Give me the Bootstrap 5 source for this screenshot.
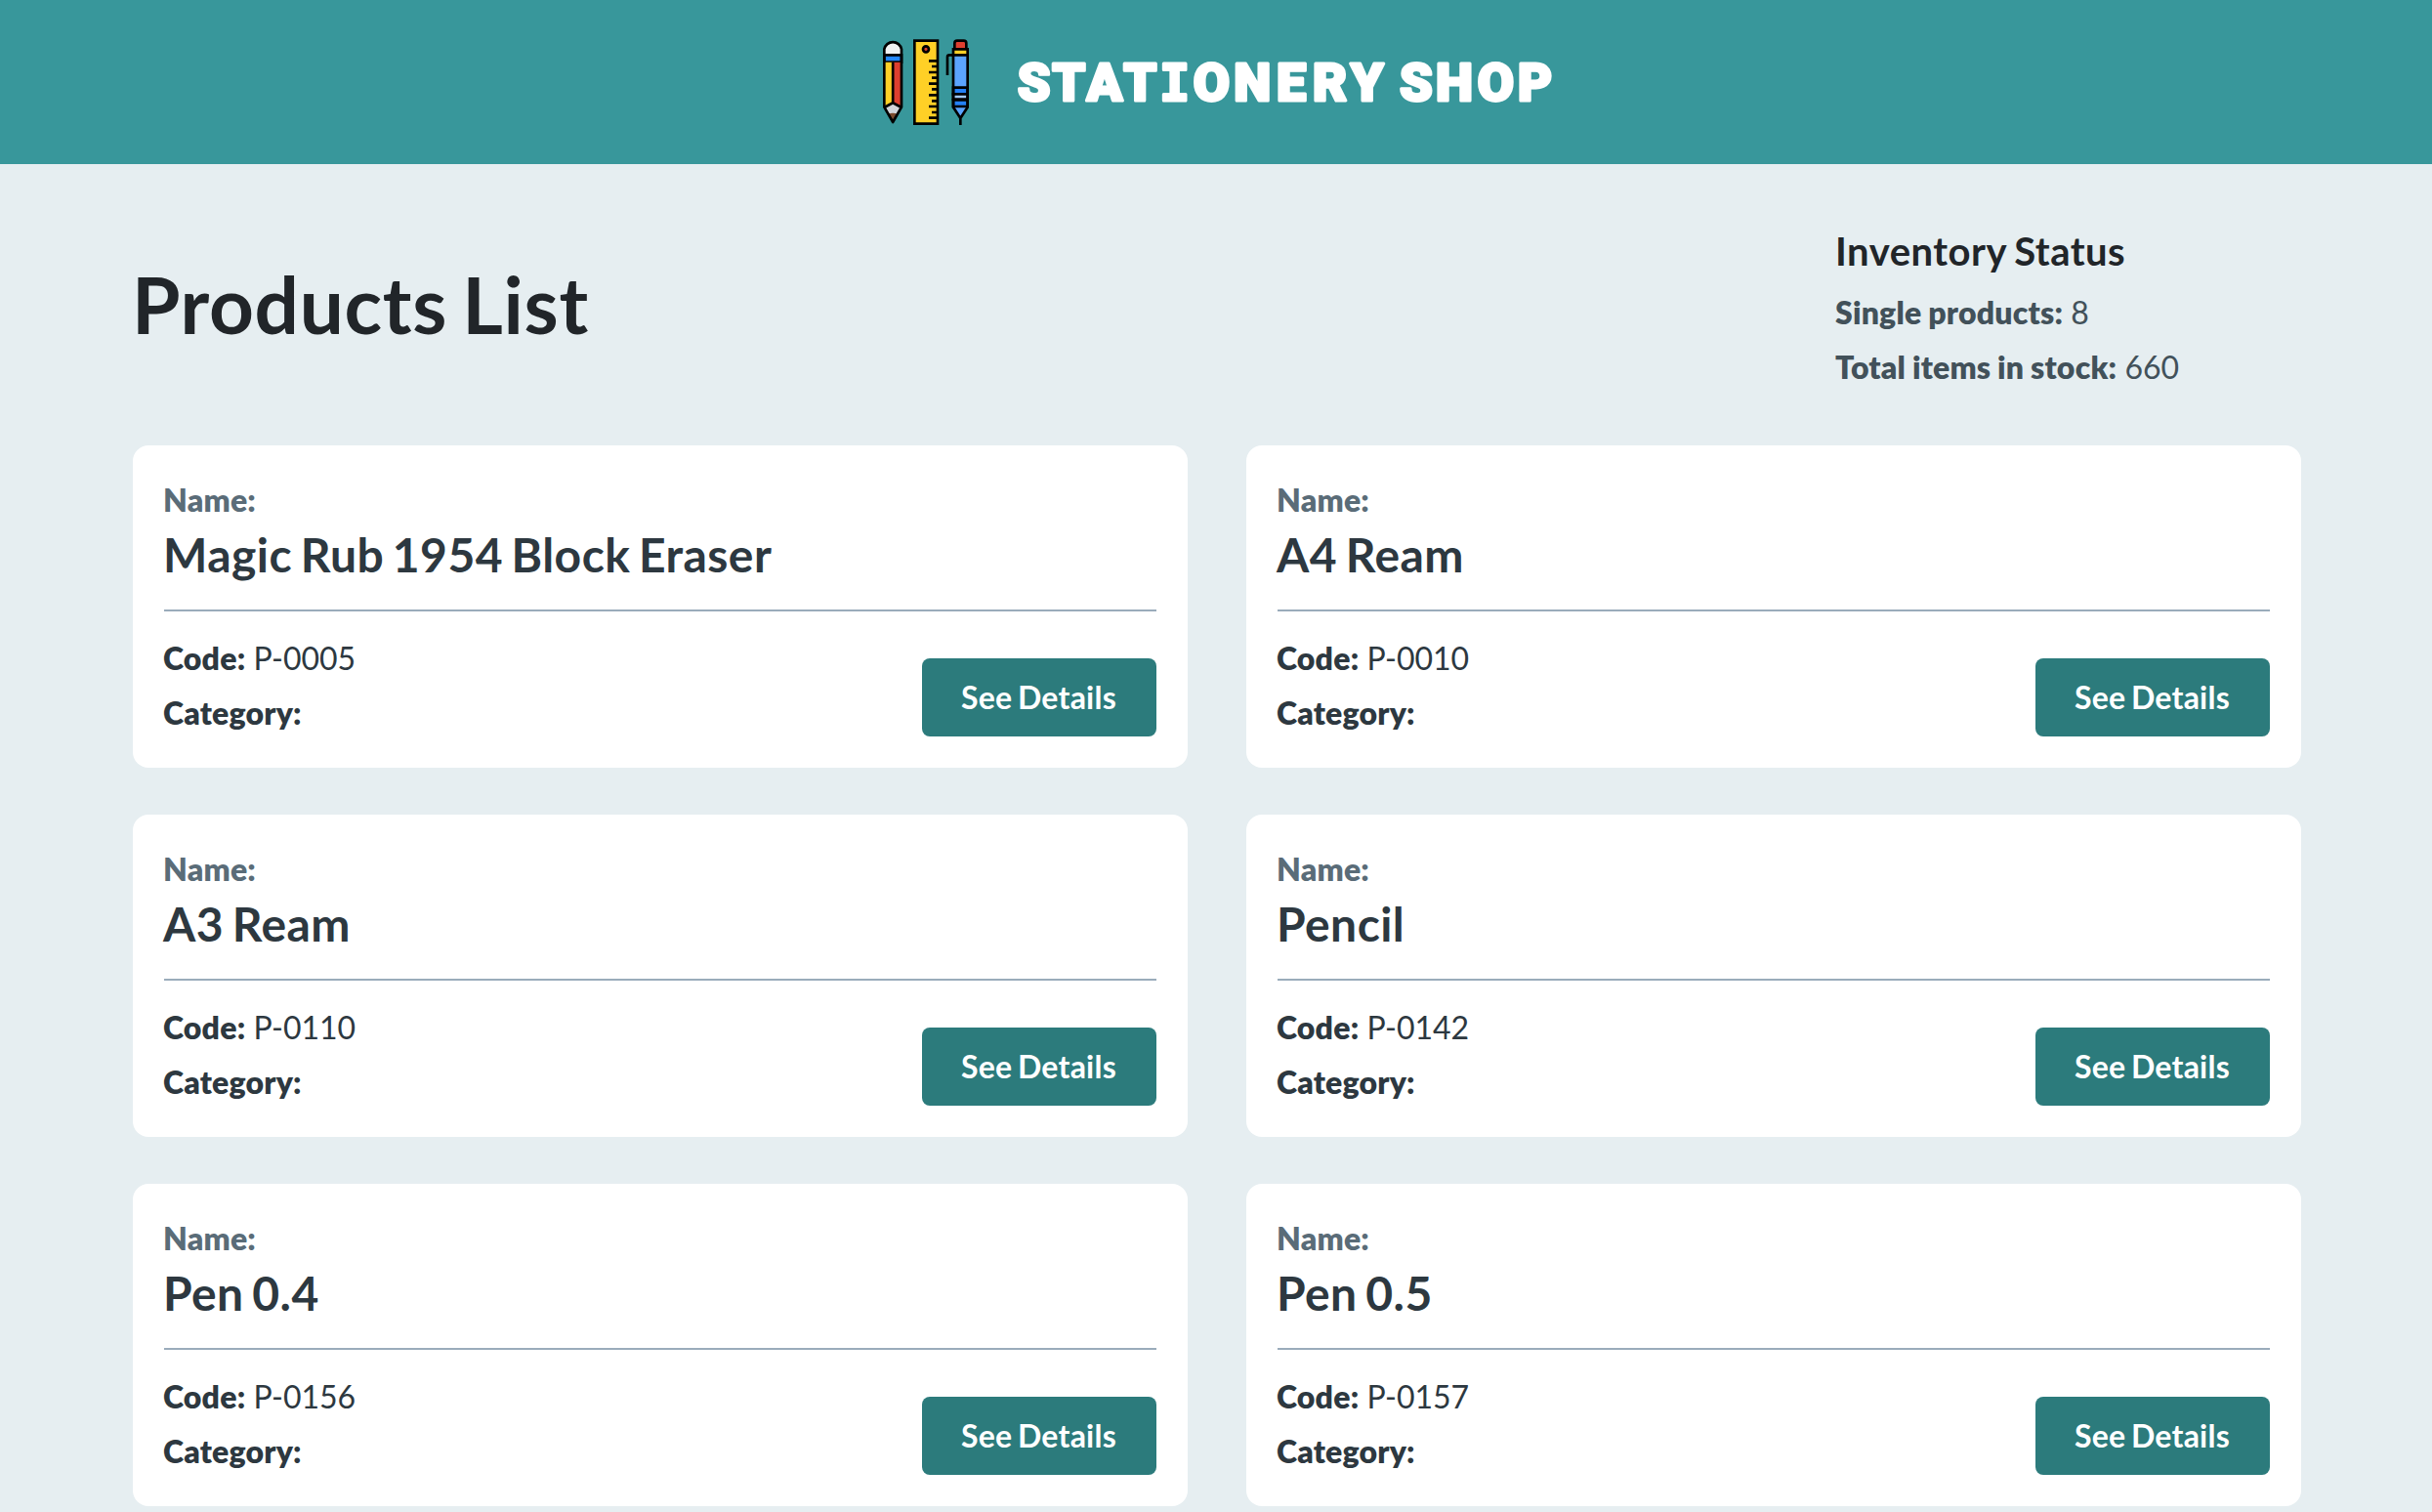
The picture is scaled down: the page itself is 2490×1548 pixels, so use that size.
<!DOCTYPE html>
<html lang="en">
<head>
<meta charset="utf-8">
<title>Stationery Shop</title>
<link href="https://cdn.jsdelivr.net/npm/bootstrap@5.3.0/dist/css/bootstrap.min.css" rel="stylesheet">
<style>
body{font-family:Lato,sans-serif;font-size:32px;line-height:48px;background:#e6eef1;color:#212529;height:1548px;overflow:hidden}
.shop-bar{height:168px;background:#38979b;gap:48px}
.shop-bar svg{overflow:visible;flex:none}
.brand-text{font:900 54px Roboto,sans-serif;fill:#fff;stroke:#fff;stroke-width:3;stroke-linejoin:round;text-anchor:middle}
.slab-i{font-family:"DejaVu Sans Mono",monospace;font-weight:700;font-size:52px}
.shop-main{padding:64px 134px 0 136px}
.list-head{height:224px}
.list-head h1{font-size:80px;line-height:96px;font-weight:700;margin:31px 0 0 -1px;letter-spacing:.7px;word-spacing:-5px}
.stock{width:477px;color:#42515a}
.stock h2{font-size:40px;line-height:48px;font-weight:700;color:#212529;margin:1px 0 15px;letter-spacing:.5px;word-spacing:-2px}
.stock p,.item p{margin-bottom:8px}
strong{font-weight:800;letter-spacing:.2px;word-spacing:-.8px}
.items{--bs-gutter-x:60px;--bs-gutter-y:48px}
.item{height:330px;padding:32px;border:0;border-radius:16px;color:#2d3840}
.item .lbl{color:#5a6c78;font-weight:800;margin-left:-1px;letter-spacing:.2px}
.item h3{font-size:48px;line-height:58px;font-weight:700;margin:3px 0 27px -1px;letter-spacing:.45px;word-spacing:-3.5px}
.item p{margin-left:-1px}
.item hr{margin:0 0 24px;border-top:2px solid #9aacbb;opacity:1}
.btn-see{width:240px;height:80px;border-radius:8px;background:#2c7b7c;color:#fff;font-size:32px;line-height:48px;font-weight:700;padding:16px 1px 16px 0;border:0;letter-spacing:.25px;word-spacing:-2.5px}
</style>
</head>
<body>
<header class="shop-bar d-flex justify-content-center align-items-center">
<svg width="88" height="88" viewBox="42 29 264 264" stroke="#000" stroke-width="8">
<path d="M46 238V60a27 27 0 0 1 53 0v178L72.500 283Z" fill="#d3d5da" stroke="none"/>
<path d="M46 78V60a27 27 0 0 1 53 0v18Z" fill="#f1f3f3" stroke="none"/>
<path d="M46 78H99V100H46Z" fill="#2488ff"/>
<path d="M46 100H72.500V225L46 239Z" fill="#ffd026" stroke="none"/>
<path d="M72.500 100H99V239L72.500 225Z" fill="#dd3f2f" stroke="none"/>
<path d="M72.500 100V225M46 239L72.500 225L99 239" fill="none"/>
<path d="M58 260Q72 252 87 260L72.500 284Z" fill="#7b4a2d" stroke="none"/>
<path d="M46 238V60a27 27 0 0 1 53 0v178L72.500 284Z" fill="none" stroke-linejoin="round"/>
<path d="M139 34H210V289H139Z" fill="#ffd026"/>
<circle cx="174" cy="60" r="9" fill="#dd3f2f"/>
<path d="M183 96H208M192 113H208M183 131H208M192 148H208M183 166H208M192 183H208M183 201H208M192 219H208M183 236H208M192 254H208M183 271H208"/>
<path d="M258 78H302V237L280 271L258 237Z" fill="#5ba4ff" stroke="none"/>
<path d="M258 178H302V198H258ZM258 216H302V236H258Z" fill="#2480f5"/>
<path d="M258 198H302V214H258Z" fill="#a0caff"/>
<path d="M262 60V42q0-8 8-8h20q8 0 8 8v18Z" fill="#dd3f2f"/>
<path d="M258 60H302V78H258Z" fill="#ffd026"/>
<path d="M258 78V238L280 272L302 238V78M280 270V293M258 78H246Q240 78 240 84V140" fill="none" stroke-linejoin="round"/>
</svg>
<svg width="546" height="56" viewBox="0 0 546 56"><text class="brand-text" y="47" x="18.6 54.3 91 127.2 162.700 200.4 242.3 282.2 321.7 359.8 385 410 449 491.3 531.7">STAT<tspan class="slab-i">I</tspan>ONERY SHOP</text></svg>
</header>
<main class="shop-main">
<div class="list-head d-flex justify-content-between align-items-start">
<h1>Products List</h1>
<div class="stock"><h2>Inventory Status</h2><p><strong>Single products:</strong> 8</p><p><strong>Total items in stock:</strong> 660</p></div>
</div>
<div class="row row-cols-2 items">
<div class="col"><article class="card item"><div class="lbl">Name:</div><h3>Magic Rub 1954 Block Eraser</h3><hr><div class="d-flex justify-content-between align-items-end"><div><p><strong>Code:</strong> P-0005</p><p class="mb-0"><strong>Category:</strong></p></div><a class="btn btn-see" href="#">See Details</a></div></article></div>
<div class="col"><article class="card item"><div class="lbl">Name:</div><h3>A4 Ream</h3><hr><div class="d-flex justify-content-between align-items-end"><div><p><strong>Code:</strong> P-0010</p><p class="mb-0"><strong>Category:</strong></p></div><a class="btn btn-see" href="#">See Details</a></div></article></div>
<div class="col"><article class="card item"><div class="lbl">Name:</div><h3>A3 Ream</h3><hr><div class="d-flex justify-content-between align-items-end"><div><p><strong>Code:</strong> P-0110</p><p class="mb-0"><strong>Category:</strong></p></div><a class="btn btn-see" href="#">See Details</a></div></article></div>
<div class="col"><article class="card item"><div class="lbl">Name:</div><h3>Pencil</h3><hr><div class="d-flex justify-content-between align-items-end"><div><p><strong>Code:</strong> P-0142</p><p class="mb-0"><strong>Category:</strong></p></div><a class="btn btn-see" href="#">See Details</a></div></article></div>
<div class="col"><article class="card item"><div class="lbl">Name:</div><h3>Pen 0.4</h3><hr><div class="d-flex justify-content-between align-items-end"><div><p><strong>Code:</strong> P-0156</p><p class="mb-0"><strong>Category:</strong></p></div><a class="btn btn-see" href="#">See Details</a></div></article></div>
<div class="col"><article class="card item"><div class="lbl">Name:</div><h3>Pen 0.5</h3><hr><div class="d-flex justify-content-between align-items-end"><div><p><strong>Code:</strong> P-0157</p><p class="mb-0"><strong>Category:</strong></p></div><a class="btn btn-see" href="#">See Details</a></div></article></div>
</div>
</main>
<script src="https://cdn.jsdelivr.net/npm/bootstrap@5.3.0/dist/js/bootstrap.bundle.min.js"></script>
</body>
</html>
